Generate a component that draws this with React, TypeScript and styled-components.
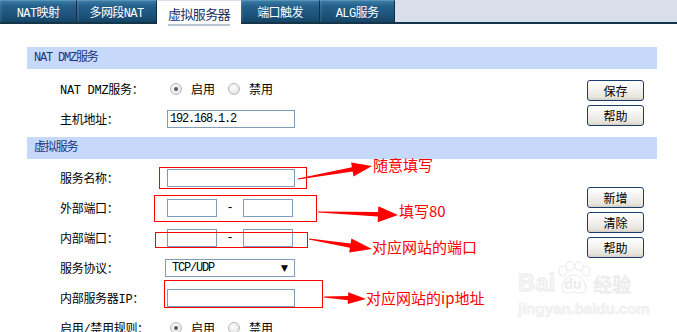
import React from "react";
import styled, { createGlobalStyle, css } from "styled-components";

const GlobalStyle = createGlobalStyle`
  html, body {
    margin: 0;
    padding: 0;
    background: #fff;
  }
  body {
    font-family: "Liberation Mono", "DejaVu Sans Mono", "Noto Sans CJK SC", monospace;
    font-size: 12px;
    color: #000;
  }
`;

const tabs = [
  { label: "NAT映射", width: 77 },
  { label: "多网段NAT", width: 80 },
  { label: "虚拟服务器", width: 84, active: true },
  { label: "端口触发", width: 79 },
  { label: "ALG服务", width: 75 },
];

type Point = [number, number];

// tapered paint-style arrow: thin tail, wider shaft, triangular head
const arrowPoints = (
  tail: Point,
  tip: Point,
  headLen: number,
  headHalf: number,
  shaftEnd = 2.2
) => {
  const dx = tip[0] - tail[0];
  const dy = tip[1] - tail[1];
  const len = Math.hypot(dx, dy);
  const ux = dx / len;
  const uy = dy / len;
  const nx = -uy;
  const ny = ux;
  const bx = tip[0] - ux * headLen;
  const by = tip[1] - uy * headLen;
  const pts: Point[] = [
    [tail[0] + nx * 0.5, tail[1] + ny * 0.5],
    [bx + nx * shaftEnd, by + ny * shaftEnd],
    [bx + nx * headHalf, by + ny * headHalf],
    tip,
    [bx - nx * headHalf, by - ny * headHalf],
    [bx - nx * shaftEnd, by - ny * shaftEnd],
    [tail[0] - nx * 0.5, tail[1] - ny * 0.5],
  ];
  return pts.map((p) => `${p[0].toFixed(1)},${p[1].toFixed(1)}`).join(" ");
};

const notes = [
  { box: [159, 167, 148, 22], tail: [298, 179], tip: [372, 166], head: [20, 7], text: "随意填写", at: [373, 156] },
  { box: [154, 195, 163, 27], tail: [318, 212], tip: [398, 215], head: [20, 8], text: "填写80", at: [399, 202] },
  { box: [155, 232, 153, 16], tail: [309, 239], tip: [372, 249], head: [22, 7], text: "对应网站的端口", at: [372, 238] },
  { box: [164, 280, 159, 28], tail: [324, 297], tip: [366, 299], head: [18, 6], text: "对应网站的ip地址", at: [366, 289] },
];

const Radio = ({ checked, label }: { checked?: boolean; label: string }) => (
  <RadioItem>
    <RadioDot $checked={checked} />
    {label}
  </RadioItem>
);

const App = () => (
  <Page>
    <GlobalStyle />
    <TabBar>
      {tabs.map((t) => (
        <Tab key={t.label} $width={t.width} $active={t.active}>
          {t.active ? <ActiveLabel>{t.label}</ActiveLabel> : t.label}
        </Tab>
      ))}
    </TabBar>

    <Content>
      <SectionHeader>NAT DMZ服务</SectionHeader>
      <SectionBody $padTop={5}>
        <Form>
          <Row>
            <Label>NAT DMZ服务：</Label>
            <RadioGroup>
              <Radio checked label="启用" />
              <Radio label="禁用" />
            </RadioGroup>
          </Row>
          <Row>
            <Label>主机地址：</Label>
            <TextInput value="192.168.1.2" readOnly />
          </Row>
        </Form>
        <ButtonColumn $padTop={6}>
          <Button>保存</Button>
          <Button>帮助</Button>
        </ButtonColumn>
      </SectionBody>

      <SectionHeader $gap={3}>虚拟服务</SectionHeader>
      <SectionBody $padTop={4}>
        <Form>
          <Row>
            <Label>服务名称：</Label>
            <TextInput readOnly />
          </Row>
          <Row>
            <Label>外部端口：</Label>
            <PortInput readOnly />
            <Dash>-</Dash>
            <PortInput readOnly />
          </Row>
          <Row>
            <Label>内部端口：</Label>
            <PortInput readOnly />
            <Dash>-</Dash>
            <PortInput readOnly />
          </Row>
          <Row>
            <Label>服务协议：</Label>
            <Select>
              TCP/UDP
              <Caret>▼</Caret>
            </Select>
          </Row>
          <Row>
            <Label>内部服务器IP：</Label>
            <TextInput readOnly />
          </Row>
          <Row>
            <Label>启用/禁用规则：</Label>
            <RadioGroup>
              <Radio checked label="启用" />
              <Radio label="禁用" />
            </RadioGroup>
          </Row>
        </Form>
        <ButtonColumn $padTop={24}>
          <Button>新增</Button>
          <Button>清除</Button>
          <Button>帮助</Button>
        </ButtonColumn>
      </SectionBody>
    </Content>

    <Watermark>
      <WmTop>
        <WmBai>Bai</WmBai>
        <WmPaw>
          <svg width="38" height="34" viewBox="0 0 38 34">
            <g fill="none" stroke="#ececec" strokeWidth="1.2">
              <ellipse cx="8" cy="10" rx="4" ry="5" />
              <ellipse cx="15" cy="5" rx="4" ry="4.5" />
              <ellipse cx="24" cy="5" rx="4" ry="4.5" />
              <ellipse cx="31" cy="10" rx="4" ry="5" />
              <path d="M19 14 C12 14 7 22 7 27 C7 32 12 33 19 31 C26 33 31 32 31 27 C31 22 26 14 19 14 Z" />
            </g>
          </svg>
          <WmDu>du</WmDu>
        </WmPaw>
        <WmCn>经验</WmCn>
      </WmTop>
      <WmUrl>jingyan.baidu.com</WmUrl>
    </Watermark>

    <Overlay width="677" height="332" viewBox="0 0 677 332">
      {notes.map((n, i) => (
        <g key={i}>
          <rect
            x={n.box[0] + 0.5}
            y={n.box[1] + 0.5}
            width={n.box[2] - 1}
            height={n.box[3] - 1}
            fill="none"
            stroke="#ff0000"
            strokeWidth="1"
          />
          <polygon
            points={arrowPoints(
              n.tail as Point,
              n.tip as Point,
              n.head[0],
              n.head[1]
            )}
            fill="#ff0000"
          />
        </g>
      ))}
    </Overlay>
    {notes.map((n, i) => (
      <Note key={i} style={{ left: n.at[0], top: n.at[1] }}>
        {n.text}
      </Note>
    ))}
  </Page>
);

export default App;

const Page = styled.div`
  position: relative;
  width: 677px;
  height: 332px;
  overflow: hidden;
  background: #fff;
`;

const TabBar = styled.div`
  display: flex;
  height: 22px;
  background: #d8dfea;
  border-bottom: 2px solid #14344a;
`;

const Tab = styled.div<{ $width: number; $active?: boolean }>`
  flex: 0 0 ${(p) => p.$width}px;
  box-sizing: border-box;
  display: flex;
  align-items: center;
  justify-content: center;
  font-size: 12px;
  letter-spacing: -0.6px;
  color: #fff;
  background: linear-gradient(#3a7ca3 0%, #24608a 25%, #1c527a 70%, #164565 100%);
  border-top: 1px solid #5a93b5;
  border-right: 1px solid #0d3048;
  box-shadow: inset 2px 0 0 rgba(255, 255, 255, 0.08);
  ${(p) =>
    p.$active &&
    css`
      background: #fff;
      color: #1c2f66;
      font-size: 13px;
      border-top: 1px solid #fff;
      border-right: none;
      box-shadow: none;
      height: 24px;
      margin-top: 1px;
      margin-bottom: -2px;
    `}
`;

const ActiveLabel = styled.span`
  padding: 2px 0 1px;
  border-bottom: 2px solid #b9c5cf;
  margin-top: 1px;
`;

const Content = styled.div`
  padding: 23px 20px 0 27px;
`;

const SectionHeader = styled.div<{ $gap?: number }>`
  height: 22px;
  line-height: 22px;
  margin-top: ${(p) => p.$gap ?? 0}px;
  padding-left: 7px;
  background: #c6d9fb;
  color: #1d3579;
  font-size: 12px;
  letter-spacing: -1.2px;
`;

const SectionBody = styled.div<{ $padTop: number }>`
  display: grid;
  grid-template-columns: 1fr 57px;
  padding: ${(p) => p.$padTop}px 13px 0 0;
`;

const Form = styled.div`
  display: flex;
  flex-direction: column;
`;

const Row = styled.div`
  display: flex;
  align-items: center;
  height: 30px;
  padding-left: 33px;
`;

const Label = styled.div`
  flex: 0 0 107px;
  font-size: 12px;
  letter-spacing: -0.3px;
  white-space: nowrap;
`;

const fieldBox = css`
  box-sizing: border-box;
  height: 18px;
  border: 1px solid #7f9db9;
  background: #fff;
  font-family: "Liberation Mono", "DejaVu Sans Mono", "Noto Sans CJK SC", monospace;
  font-size: 12px;
  letter-spacing: -1.2px;
  padding: 0 2px;
  margin: 0;
  outline: none;
`;

const TextInput = styled.input`
  ${fieldBox}
  width: 128px;
`;

const PortInput = styled.input`
  ${fieldBox}
  width: 50px;
`;

const Dash = styled.span`
  width: 26px;
  text-align: center;
`;

const Select = styled.div`
  ${fieldBox}
  width: 130px;
  margin-left: -2px;
  padding: 0 6px;
  display: flex;
  align-items: center;
  justify-content: space-between;
`;

const Caret = styled.span`
  font-family: "DejaVu Sans", sans-serif;
  font-size: 9px;
  letter-spacing: 0;
`;

const RadioGroup = styled.div`
  display: flex;
  align-items: center;
  gap: 13px;
  margin-left: 3px;
`;

const RadioItem = styled.span`
  display: flex;
  align-items: center;
  gap: 9px;
`;

const RadioDot = styled.span<{ $checked?: boolean }>`
  position: relative;
  box-sizing: border-box;
  width: 12px;
  height: 12px;
  border-radius: 50%;
  border: 1px solid #b9b9b9;
  background: radial-gradient(circle at 40% 35%, #fdfdfd, #dcdcdc);
  ${(p) =>
    p.$checked &&
    css`
      &::after {
        content: "";
        position: absolute;
        left: 3px;
        top: 3px;
        width: 4px;
        height: 4px;
        border-radius: 50%;
        background: #5a5a5a;
      }
    `}
`;

const ButtonColumn = styled.div<{ $padTop: number }>`
  display: flex;
  flex-direction: column;
  gap: 4px;
  padding-top: ${(p) => p.$padTop}px;
`;

const Button = styled.div`
  box-sizing: border-box;
  width: 57px;
  height: 21px;
  display: flex;
  align-items: center;
  justify-content: center;
  border: 1px solid #1b3d6d;
  border-radius: 3px;
  background: linear-gradient(#ffffff 0%, #f3f2ee 45%, #e7e4dc 85%, #d4cfc4 100%);
  font-size: 12px;
`;

const Overlay = styled.svg`
  position: absolute;
  left: 0;
  top: 0;
  pointer-events: none;
`;

const Note = styled.span`
  position: absolute;
  font-family: "Noto Sans CJK SC", "Liberation Sans", sans-serif;
  font-size: 15px;
  line-height: 18px;
  color: #ff0000;
  white-space: nowrap;
`;

const Watermark = styled.div`
  position: absolute;
  left: 518px;
  top: 261px;
  pointer-events: none;
`;

const WmTop = styled.div`
  display: flex;
  align-items: flex-end;
`;

const WmBai = styled.span`
  font-family: "Liberation Sans", sans-serif;
  font-weight: bold;
  font-size: 24px;
  line-height: 24px;
  color: #f7f7f7;
  -webkit-text-stroke: 0.8px #eaeaea;
`;

const WmPaw = styled.span`
  position: relative;
  width: 38px;
  height: 34px;
`;

const WmDu = styled.span`
  position: absolute;
  left: 9px;
  top: 15px;
  font-family: "Liberation Sans", sans-serif;
  font-weight: bold;
  font-size: 14px;
  color: #ececec;
`;

const WmCn = styled.span`
  font-family: "Noto Sans CJK SC", sans-serif;
  font-size: 19px;
  line-height: 22px;
  color: #f7f7f7;
  -webkit-text-stroke: 0.8px #eaeaea;
`;

const WmUrl = styled.div`
  margin-top: 5px;
  font-family: "Liberation Sans", sans-serif;
  font-weight: bold;
  font-size: 15px;
  color: #f5f5f5;
  -webkit-text-stroke: 0.5px #ebebeb;
`;
